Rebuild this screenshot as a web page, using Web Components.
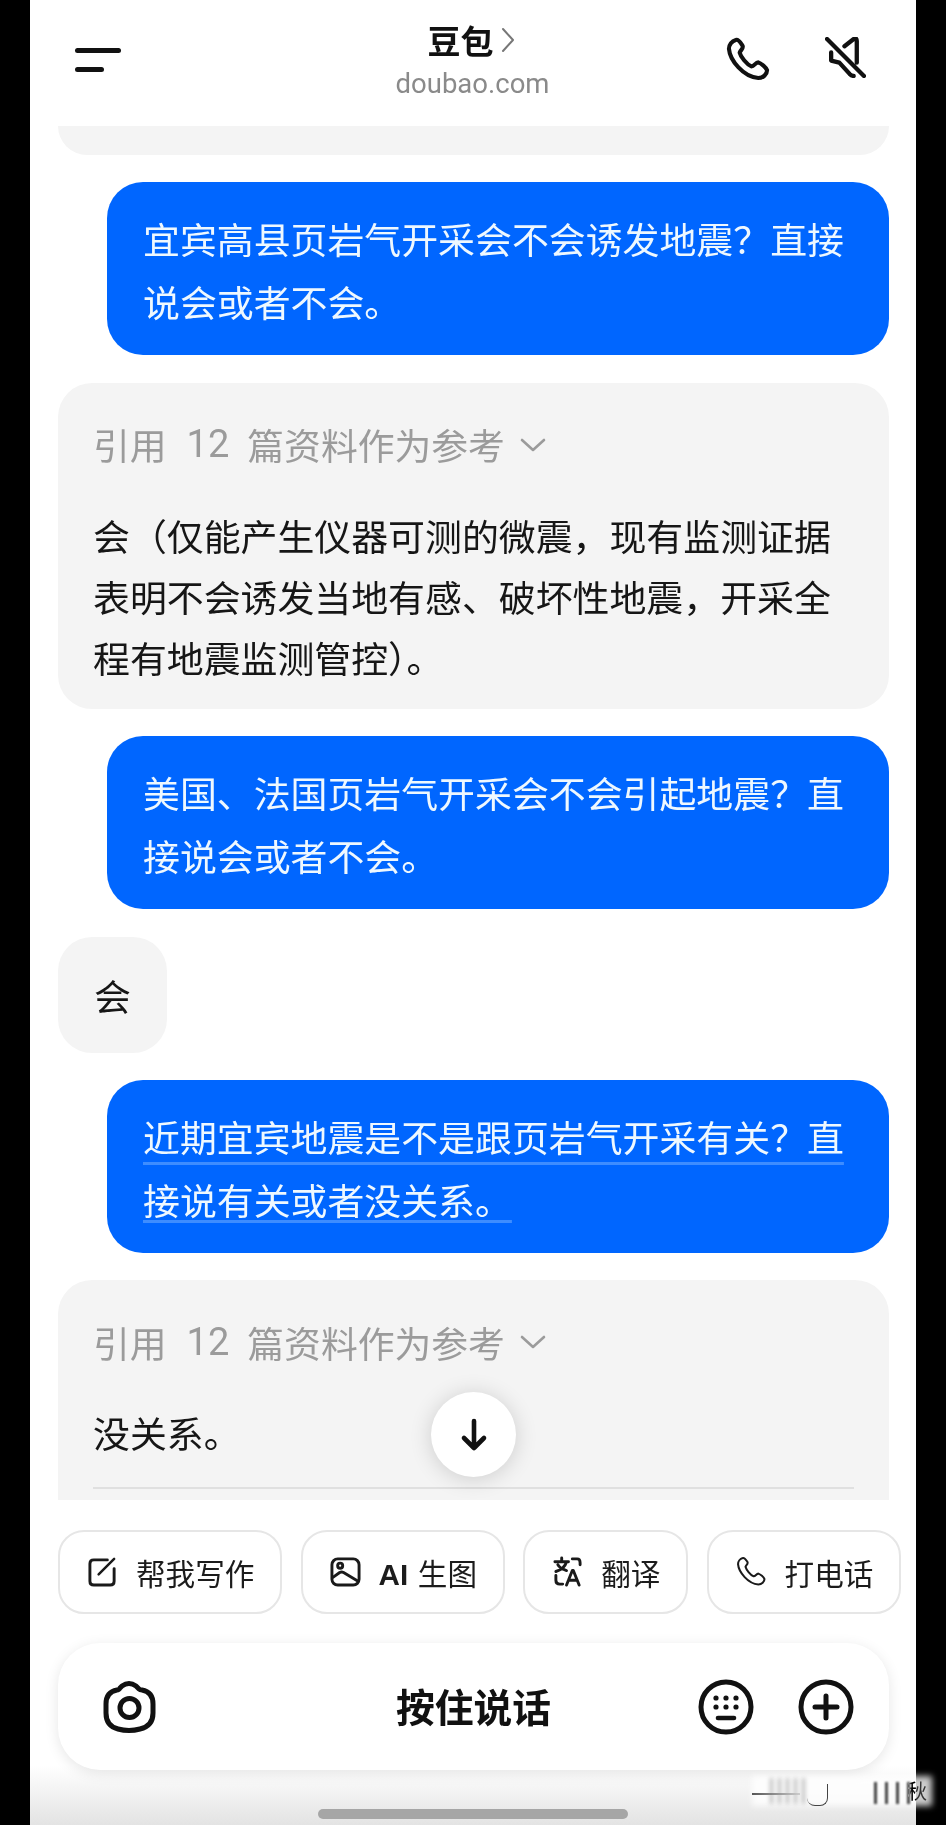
<!DOCTYPE html>
<html lang="zh-CN">
<head>
<meta charset="utf-8">
<title>豆包</title>
<style>
    html, body { margin: 0; background: #000; }
    body { width: 946px; height: 1825px; overflow: hidden; font-family: "Noto Sans CJK SC", "Liberation Sans", sans-serif; }
    u { text-decoration: underline #3e8dff 3px; text-underline-offset: 10px; text-decoration-skip-ink: none; }
    u.near { text-underline-offset: 5px; }
</style>
</head>
<body>
<phone-frame>
    <top-bar></top-bar>
    <chat-list>
        <chat-bubble stub></chat-bubble>
        <chat-bubble user>宜宾高县页岩气开采会不会诱发地震&#xFF1F;直接说会或者不会&#x3002;</chat-bubble>
        <chat-bubble>
            <ref-line></ref-line>
            会&#xFF08;仅能产生仪器可测的微震&#xFF0C;现有监测证据表明不会诱发当地有感&#x3001;破坏性地震&#xFF0C;开采全程有地震监测管控&#xFF09;&#x3002;
        </chat-bubble>
        <chat-bubble user>美国&#x3001;法国页岩气开采会不会引起地震&#xFF1F;直接说会或者不会&#x3002;</chat-bubble>
        <chat-bubble short>会</chat-bubble>
        <chat-bubble user><u>近期宜宾地震是不是跟页岩气开采有关&#xFF1F;直</u><u class="near">接说有关或者没关系&#x3002;</u></chat-bubble>
        <chat-bubble cut>
            <ref-line></ref-line>
            没关系&#x3002;
        </chat-bubble>
    </chat-list>
    <scroll-down></scroll-down>
    <chip-row>
        <action-chip icon="edit">帮我写作</action-chip>
        <action-chip icon="image"><b>AI</b> 生图</action-chip>
        <action-chip icon="translate">翻译</action-chip>
        <action-chip icon="phone">打电话</action-chip>
    </chip-row>
    <voice-bar>按住说话</voice-bar>
    <home-bar></home-bar>
    <smear-mark>秋</smear-mark>
</phone-frame>

<script>
const PHONE_PATH = 'M10 3C6 4 3 8 3 12C4 24 18 41 33 42C38 42 42 38 42 34C41 31 36 27 33 26C30 26 29 30 26 30C21 28 15 20 14 16C15 13 18 12 17 9C15 6 13 2 10 3Z';

class PhoneFrame extends HTMLElement {
    constructor() {
        super();
        this.attachShadow({mode: 'open'});
    }

    connectedCallback() {
        this.shadowRoot.innerHTML = `
        <style>
            :host {
                display: flex;
                flex-direction: column;
                position: relative;
                box-sizing: border-box;
                width: 886px;
                height: 1825px;
                margin-left: 30px;
                background: #fff;
                color: #1a1a1a;
            }
        </style>
        <slot></slot>
        `;
    }
}

class TopBar extends HTMLElement {
    constructor() {
        super();
        this.attachShadow({mode: 'open'});
    }

    connectedCallback() {
        this.shadowRoot.innerHTML = `
        <style>
            :host {
                display: grid;
                grid-template-columns: 1fr auto 1fr;
                align-items: start;
                box-sizing: border-box;
                height: 126px;
                padding: 0 50px 0 45px;
            }
            .menu { display: flex; flex-direction: column; gap: 14px; margin-top: 48px; }
            .menu i { display: block; height: 5px; width: 46px; background: #111; border-radius: 3px; }
            .menu i + i { width: 29px; }
            .title { display: flex; flex-direction: column; align-items: center; padding: 16px 0 0 2px; }
            .name { display: flex; align-items: center; gap: 8px; font-size: 33px; line-height: 48px; font-weight: 700; color: #111; }
            .url { font-family: Roboto, "Liberation Sans", sans-serif; font-size: 27.5px; line-height: 40px; color: #8a8a8a; margin-left: 2px; }
            .actions { display: flex; justify-content: flex-end; gap: 55px; padding-top: 37px; }
            svg { display: block; fill: none; stroke: #111; stroke-linecap: round; stroke-linejoin: round; }
        </style>
        <div class="menu"><i></i><i></i></div>
        <div class="title">
            <div class="name">豆包<svg width="14" height="26" viewBox="0 0 14 26" style="stroke:#777;stroke-width:2"><path d="M2 2l10 11L2 24"/></svg></div>
            <div class="url">doubao.com</div>
        </div>
        <div class="actions">
            <svg width="44" height="44" viewBox="0 0 45 45" stroke-width="4.2"><path d="${PHONE_PATH}"/></svg>
            <svg width="41" height="41" viewBox="0 0 40 40" stroke-width="4.2"><path d="M2 2L38 38M19 9L28 2Q31 0 31 4V25M6 15V23L14 25L24 36Q26 38 28 38"/></svg>
        </div>
        `;
    }
}

class ChatList extends HTMLElement {
    constructor() {
        super();
        this.attachShadow({mode: 'open'});
    }

    connectedCallback() {
        this.shadowRoot.innerHTML = `
        <style>
            :host {
                display: flex;
                flex-direction: column;
                align-items: flex-end;
                gap: 27.4px;
                height: 1374px;
                overflow: hidden;
                padding: 0 27px 0 28px;
                flex: none;
            }
        </style>
        <slot></slot>
        `;
    }
}

class ChatBubble extends HTMLElement {
    constructor() {
        super();
        this.attachShadow({mode: 'open'});
    }

    connectedCallback() {
        this.shadowRoot.innerHTML = `
        <style>
            :host {
                display: block;
                box-sizing: border-box;
                flex: none;
                align-self: stretch;
                padding: 31px 35px 21px;
                background: #f4f4f4;
                border-radius: 34px;
                font-size: 36.9px;
                line-height: 61px;
                color: #161616;
            }
            :host([user]) {
                align-self: flex-end;
                width: 782px;
                padding: 25px 36px 22px;
                margin-left: auto;
                background: #0066ff;
                border-radius: 36px;
                color: #eef8ff;
                line-height: 63px;
            }
            :host([short]) { align-self: flex-start; padding: 28px 36px 27px; }
            :host([stub]) { height: 29px; padding: 0; border-radius: 0 0 34px 34px; }
            :host([cut]) { height: 300px; }
            .rule { height: 2px; margin: 24px 0 0; background: #e0e0e0; }
        </style>
        <span class="text"><slot></slot></span>
        ${this.hasAttribute('cut') ? '<div class="rule"></div>' : ''}
        `;
    }
}

class RefLine extends HTMLElement {
    constructor() {
        super();
        this.attachShadow({mode: 'open'});
    }

    connectedCallback() {
        this.shadowRoot.innerHTML = `
        <style>
            :host {
                display: flex;
                align-items: center;
                height: 62px;
                margin-bottom: 29px;
                font-size: 36.8px;
                color: #9b9b9b;
                white-space: nowrap;
            }
            b { font-family: Roboto, sans-serif; font-size: 38px; font-weight: 400; margin: 0 18px 0 20px; }
            svg { margin-left: 15px; fill: none; stroke: #9b9b9b; stroke-width: 2.6; stroke-linecap: round; stroke-linejoin: round; }
        </style>
        引用<b>12</b>篇资料作为参考
        <svg width="26" height="14" viewBox="0 0 26 14"><path d="M2 2l11 10L24 2"/></svg>
        `;
    }
}

class ScrollDown extends HTMLElement {
    constructor() {
        super();
        this.attachShadow({mode: 'open'});
    }

    connectedCallback() {
        this.shadowRoot.innerHTML = `
        <style>
            :host {
                display: flex;
                align-items: center;
                justify-content: center;
                position: absolute;
                left: 401px;
                top: 1392px;
                width: 85px;
                height: 85px;
                border-radius: 50%;
                background: #fff;
                box-shadow: 0 2px 22px rgba(0, 0, 0, .16);
            }
            svg { fill: none; stroke: #111; stroke-width: 4.6; stroke-linecap: round; stroke-linejoin: round; }
        </style>
        <svg width="30" height="34" viewBox="0 0 30 34"><path d="M15 3V30M5 20L15 30L25 20"/></svg>
        `;
    }
}

class ChipRow extends HTMLElement {
    constructor() {
        super();
        this.attachShadow({mode: 'open'});
    }

    connectedCallback() {
        this.shadowRoot.innerHTML = `
        <style>
            :host {
                display: flex;
                gap: 18.2px;
                margin: 30px 0 0 28px;
                flex: none;
            }
        </style>
        <slot></slot>
        `;
    }
}

class ActionChip extends HTMLElement {
    constructor() {
        super();
        this.attachShadow({mode: 'open'});
    }

    get icon() {
        const icons = {
            edit: '<path d="M21 4H7Q3 4 3 8V26Q3 30 7 30H24Q28 30 28 26V13"/><path d="M12 19L28 3" stroke-width="2.6"/>',
            image: '<rect x="2" y="3" width="28" height="27" rx="6"/><circle cx="10.5" cy="10" r="2.6"/><path d="M3 22L10 17Q12 16 14 17L29 26"/>',
            translate: '<path d="M3 6H17M10 2V6M15 6Q13 13 4 16M6 9Q8 13 15 15"/><path d="M21 3H26Q29 3 29 7V9M4 20V25Q4 29 8 29H11"/><path d="M15 30L21 15H22L28 30M17 25H26"/>',
            phone: `<g transform="scale(.7)"><path d="${PHONE_PATH}"/></g>`
        };
        return icons[this.getAttribute('icon')];
    }

    connectedCallback() {
        this.shadowRoot.innerHTML = `
        <style>
            :host {
                display: flex;
                align-items: center;
                gap: 18px;
                box-sizing: border-box;
                height: 84px;
                padding: 0 26px 0 27px;
                border: 2px solid #e6e6e6;
                border-radius: 26px;
                font-size: 29.6px;
                color: #1c1c1c;
                white-space: nowrap;
                flex: none;
            }
            svg { flex: none; margin-top: -2px; fill: none; stroke: #1a1a1a; stroke-width: 3; stroke-linecap: round; stroke-linejoin: round; }
            ::slotted(b) { font-family: "Liberation Sans", sans-serif; font-weight: 700; margin-right: 3px; }
        </style>
        <svg width="31" height="31" viewBox="0 0 32 32">${this.icon}</svg>
        <span><slot></slot></span>
        `;
    }
}

class VoiceBar extends HTMLElement {
    constructor() {
        super();
        this.attachShadow({mode: 'open'});
    }

    connectedCallback() {
        this.shadowRoot.innerHTML = `
        <style>
            :host {
                display: grid;
                grid-template-columns: 1fr auto 1fr;
                align-items: center;
                box-sizing: border-box;
                width: 831px;
                height: 127px;
                margin: 29px 0 0 28px;
                padding: 0 35px;
                border-radius: 42px;
                background: #fff;
                box-shadow: 0 3px 14px rgba(0, 0, 0, .1);
                flex: none;
                position: relative;
            }
            .camera { margin-left: 9px; }
            .label { font-size: 38.8px; font-weight: 700; color: #111; margin-top: -3px; }
            .tools { display: flex; justify-content: flex-end; gap: 44px; }
            svg { display: block; fill: none; stroke: #111; stroke-width: 5; stroke-linecap: round; stroke-linejoin: round; }
            .dots { fill: #111; stroke: none; }
        </style>
        <svg class="camera" width="55" height="54" viewBox="0 0 55 54">
            <path d="M20 6Q27 1 34 6L37 9Q38 10 40 10Q51 12 51 24V33Q51 46 38 49Q27 52 16 49Q4 46 4 33V24Q4 12 15 10Q17 10 18 8Z"/>
            <circle cx="27.5" cy="28" r="9.5"/>
        </svg>
        <div class="label"><slot></slot></div>
        <div class="tools">
            <svg width="56" height="56" viewBox="0 0 56 56">
                <circle cx="28" cy="28" r="25"/>
                <g class="dots">
                    <circle cx="18" cy="19" r="2.6"/><circle cx="28" cy="19" r="2.6"/><circle cx="38" cy="19" r="2.6"/>
                    <circle cx="18" cy="28" r="2.6"/><circle cx="28" cy="28" r="2.6"/><circle cx="38" cy="28" r="2.6"/>
                </g>
                <path d="M20 39H36" stroke-width="4.6"/>
            </svg>
            <svg width="56" height="56" viewBox="0 0 56 56">
                <circle cx="28" cy="28" r="25"/>
                <path d="M28 17V39M17 28H39"/>
            </svg>
        </div>
        `;
    }
}

class HomeBar extends HTMLElement {
    constructor() {
        super();
        this.attachShadow({mode: 'open'});
    }

    connectedCallback() {
        this.shadowRoot.innerHTML = `
        <style>
            :host {
                display: flex;
                justify-content: center;
                align-items: flex-end;
                box-sizing: border-box;
                flex: 1;
                padding-bottom: 6px;
                background: linear-gradient(#fff 30%, #e3e3e3);
                margin-top: -30px;
            }
            i { display: block; width: 310px; height: 10px; border-radius: 5px; background: #a6a6a6; }
        </style>
        <i></i>
        `;
    }
}

class SmearMark extends HTMLElement {
    constructor() {
        super();
        this.attachShadow({mode: 'open'});
    }

    connectedCallback() {
        this.shadowRoot.innerHTML = `
        <style>
            :host {
                display: block;
                position: absolute;
                left: 722px;
                top: 1776px;
                width: 172px;
                height: 30px;
            }
            .glow { position: absolute; inset: 0 -8px 0 0; background: rgba(255, 255, 255, .8); filter: blur(3px); }
            .bars {
                position: absolute; left: 18px; top: 2px; width: 40px; height: 26px; filter: blur(2px);
                background: repeating-linear-gradient(90deg, #b8b8b8 0 3px, transparent 3px 8px);
            }
            .bars.right {
                left: 122px; width: 40px; top: 6px; height: 22px; filter: blur(1px);
                background: repeating-linear-gradient(90deg, #444 0 3px, transparent 3px 11px);
            }
            .dash { position: absolute; left: 0; top: 17px; width: 48px; height: 2px; background: linear-gradient(90deg, #555, #ccc); filter: blur(.5px); }
            .hook {
                position: absolute; left: 55px; top: 8px; width: 20px; height: 21px;
                border: solid #444; border-width: 0 1.5px 1.5px 0; border-radius: 0 0 8px 8px;
            }
            .glyph {
                position: absolute; left: 155px; top: 0; font-size: 20px; line-height: 30px;
                color: #fff; mix-blend-mode: difference;
            }
        </style>
        <div class="glow"></div>
        <div class="bars"></div>
        <div class="bars right"></div>
        <div class="dash"></div>
        <div class="hook"></div>
        <div class="glyph"><slot></slot></div>
        `;
    }
}

customElements.define('phone-frame', PhoneFrame);
customElements.define('top-bar', TopBar);
customElements.define('chat-list', ChatList);
customElements.define('chat-bubble', ChatBubble);
customElements.define('ref-line', RefLine);
customElements.define('scroll-down', ScrollDown);
customElements.define('chip-row', ChipRow);
customElements.define('action-chip', ActionChip);
customElements.define('voice-bar', VoiceBar);
customElements.define('home-bar', HomeBar);
customElements.define('smear-mark', SmearMark);
</script>
</body>
</html>
